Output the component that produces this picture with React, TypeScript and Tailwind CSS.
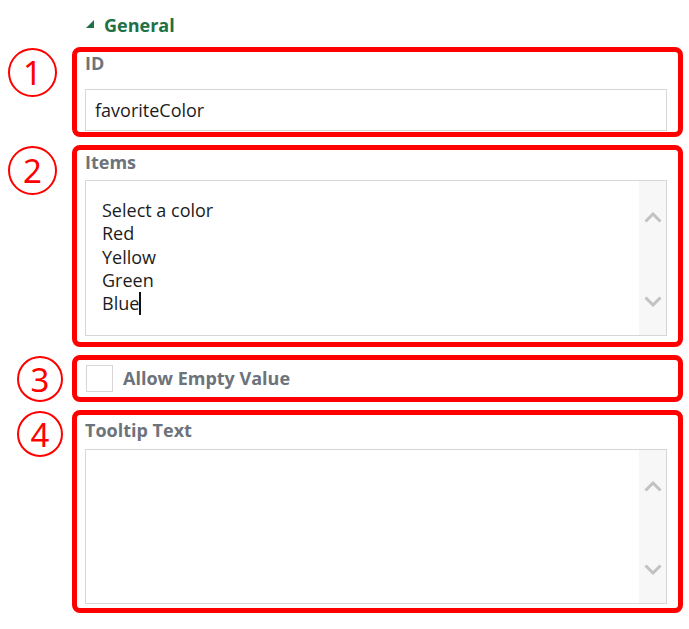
import { ReactNode } from 'react';

const Chevron = ({ up }: { up?: boolean }) => (
  <svg width="18" height="11" viewBox="0 0 18 11" className="block">
    <path
      d={up ? 'M1.5 9.5 L9 2 L16.5 9.5' : 'M1.5 1.5 L9 9 L16.5 1.5'}
      fill="none"
      stroke="#c2c2c2"
      strokeWidth="3"
    />
  </svg>
);

const Scrollbar = () => (
  <div className="w-[27px] bg-[#f7f7f7] flex flex-col items-center justify-between pt-[31px] pb-[28px]">
    <Chevron up />
    <Chevron />
  </div>
);

const Circle = ({ n, big }: { n: string; big?: boolean }) => (
  <div
    className={
      big
        ? 'ml-[8px] mt-[1px] w-[49px] h-[49px] rounded-full border-2 border-[#ff0000] flex items-center justify-center'
        : 'ml-[17px] mt-[1px] w-[46px] h-[46px] rounded-full border-2 border-[#ff0000] flex items-center justify-center'
    }
  >
    <span className="text-[33px] leading-none text-[#ff0000] font-['Noto_Sans',sans-serif] font-normal">
      {n}
    </span>
  </div>
);

const Row = ({
  n,
  big,
  className,
  children,
}: {
  n: string;
  big?: boolean;
  className: string;
  children: ReactNode;
}) => (
  <div className="flex">
    <div className="w-[72px] shrink-0">
      <Circle n={n} big={big} />
    </div>
    <div
      className={`w-[611px] border-[5px] border-[#ff0000] rounded-[8px] ${className}`}
    >
      {children}
    </div>
  </div>
);

const Label = ({ text, className }: { text: string; className: string }) => (
  <div
    className={`text-[18px] leading-[24px] font-bold text-[#6d737b] ${className}`}
  >
    {text}
  </div>
);

const App = () => {
  const items = ['Select a color', 'Red', 'Yellow', 'Green'];

  return (
    <div className="w-[689px] h-[629px] bg-white font-['Open_Sans',sans-serif] flex flex-col gap-[8px]">
      <div className="h-[39px] flex items-end pl-[86px] gap-[10px]">
        <svg width="8" height="8" viewBox="0 0 8 8" className="mb-[11px]">
          <polygon points="8,0 8,8 0,8" fill="#1e7145" />
        </svg>
        <span className="text-[18px] leading-[26px] font-bold text-[#1e7145] pb-[1px]">
          General
        </span>
      </div>

      <Row n="1" big className="h-[90px] pl-[8px] pr-[11px]">
        <Label text="ID" className="h-[37px] -mt-[1px]" />
        <div className="h-[42px] mt-[1px] border border-[#d6d6d6] flex items-center px-[9px] text-[18px] text-[#1c1c1c]">
          favoriteColor
        </div>
      </Row>

      <Row n="2" big className="h-[202px] pl-[8px] pr-[11px]">
        <Label text="Items" className="h-[30px]" />
        <div className="h-[156px] border border-[#d6d6d6] flex">
          <div className="flex-1 pl-[16px] pt-[18px] text-[18px] leading-[23.3px] text-[#1c1c1c]">
            {items.map((item) => (
              <div key={item}>{item}</div>
            ))}
            <div className="flex items-center">
              Blue
              <span className="inline-block w-[1.5px] h-[23px] bg-[#111]" />
            </div>
          </div>
          <Scrollbar />
        </div>
      </Row>

      <Row n="3" className="h-[47px] pl-[9px] pr-[11px] flex items-center gap-[10px]">
        <div className="w-[27px] h-[27px] border border-[#d6d6d6] bg-white" />
        <span className="text-[18px] font-bold text-[#6d737b]">Allow Empty Value</span>
      </Row>

      <Row n="4" className="h-[203px] pl-[8px] pr-[11px]">
        <Label text="Tooltip Text" className="h-[34px] pt-[3px]" />
        <div className="h-[155px] border border-[#d6d6d6] flex">
          <div className="flex-1" />
          <Scrollbar />
        </div>
      </Row>
    </div>
  );
};

export default App;
